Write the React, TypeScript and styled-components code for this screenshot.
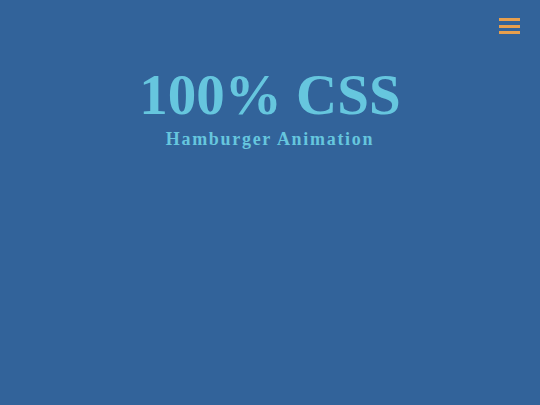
import React from "react";
import styled, { createGlobalStyle } from "styled-components";

const GlobalStyle = createGlobalStyle`
  html, body {
    margin: 0;
    padding: 0;
    background: #32639a;
  }
  body {
    font-family: "Liberation Serif", "Times New Roman", serif;
  }
`;

const Page = styled.main`
  position: relative;
  width: 100%;
  height: 405px;
  background: #32639a;
  overflow: hidden;
`;

const Hero = styled.header`
  display: flex;
  flex-direction: column;
  align-items: center;
  padding-top: 66px;
`;

const Title = styled.h1`
  margin: 0;
  font-size: 57px;
  line-height: 1;
  font-weight: 700;
  color: #66c6de;
`;

const Subtitle = styled.h2`
  margin: 7px 0 0;
  font-size: 18px;
  line-height: 1;
  font-weight: 700;
  letter-spacing: 1.7px;
  color: #66c6de;
`;

const MenuButton = styled.button`
  position: absolute;
  top: 17px;
  right: 20px;
  display: flex;
  flex-direction: column;
  gap: 3.5px;
  padding: 1px 0;
  background: none;
  border: none;
  cursor: pointer;
`;

const Bar = styled.span`
  display: block;
  width: 21px;
  height: 3px;
  background: #e89f4c;
`;

const App = () => {
  return (
    <>
      <GlobalStyle />
      <Page>
        <MenuButton aria-label="Menu">
          <Bar />
          <Bar />
          <Bar />
        </MenuButton>
        <Hero>
          <Title>100% CSS</Title>
          <Subtitle>Hamburger Animation</Subtitle>
        </Hero>
      </Page>
    </>
  );
};

export default App;
